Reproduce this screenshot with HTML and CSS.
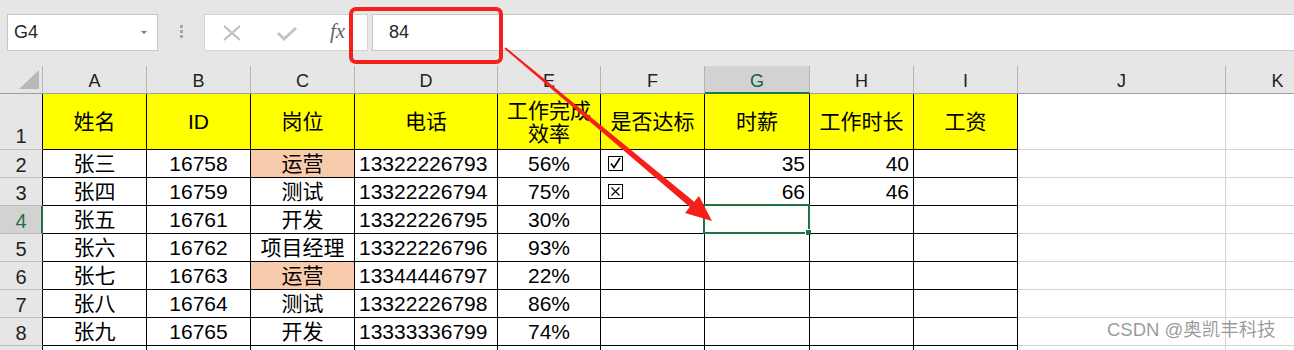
FILE: index.html
```html
<!DOCTYPE html>
<html lang="zh-CN">
<head>
    <meta charset="UTF-8">
    <title>工资表</title>
    <link rel="stylesheet" href="styles.css">
</head>
<body>
    <div class="app">
        <div class="toolbar">
            <div class="namebox"><span>G4</span><span class="caret"></span></div>
            <div class="grip"><i></i><i></i><i></i></div>
            <div class="fxbox">
                <svg class="ico-x" width="18" height="16" viewBox="0 0 18 16"><path d="M1 1 L17 15 M17 1 L1 15" stroke="#bdbdbd" stroke-width="2" fill="none"/></svg>
                <svg class="ico-ok" width="20" height="14" viewBox="0 0 20 14"><path d="M1 6 L7 12 L19 1" stroke="#c4c4c4" stroke-width="3" fill="none"/></svg>
                <span class="fx">fx</span>
            </div>
            <div class="formula">84</div>
        </div>

        <div class="sheet">
            <!-- column headers -->
            <div class="corner"><svg width="43" height="28"><polygon points="19,23 39,4 39,23" fill="#b8b8b8"/></svg></div>
            <div class="colhdr">A</div>
            <div class="colhdr">B</div>
            <div class="colhdr">C</div>
            <div class="colhdr">D</div>
            <div class="colhdr">E</div>
            <div class="colhdr">F</div>
            <div class="colhdr active">G</div>
            <div class="colhdr">H</div>
            <div class="colhdr">I</div>
            <div class="colhdr">J</div>
            <div class="colhdr">K</div>

            <!-- row 1 -->
            <div class="rowhdr first">1</div>
            <div class="cell b y c">姓名</div>
            <div class="cell b y c">ID</div>
            <div class="cell b y c">岗位</div>
            <div class="cell b y c">电话</div>
            <div class="cell b y c wrap">工作完成<br>效率</div>
            <div class="cell b y c">是否达标</div>
            <div class="cell b y c">时薪</div>
            <div class="cell b y c">工作时长</div>
            <div class="cell b y c">工资</div>
            <div class="cell"></div>
            <div class="cell"></div>

            <!-- row 2 -->
            <div class="rowhdr">2</div>
            <div class="cell b c">张三</div>
            <div class="cell b c">16758</div>
            <div class="cell b c pk">运营</div>
            <div class="cell b l">13322226793</div>
            <div class="cell b c">56%</div>
            <div class="cell b box"><svg width="15" height="15" viewBox="0 0 15 15"><rect x="0.5" y="0.5" width="14" height="14" fill="none" stroke="#000"/><path d="M3 7.5 L6 11.5 L12 2" stroke="#000" stroke-width="1.6" fill="none"/></svg></div>
            <div class="cell b r">35</div>
            <div class="cell b r">40</div>
            <div class="cell b"></div>
            <div class="cell"></div>
            <div class="cell"></div>

            <!-- row 3 -->
            <div class="rowhdr">3</div>
            <div class="cell b c">张四</div>
            <div class="cell b c">16759</div>
            <div class="cell b c">测试</div>
            <div class="cell b l">13322226794</div>
            <div class="cell b c">75%</div>
            <div class="cell b box"><svg width="15" height="15" viewBox="0 0 15 15"><rect x="0.5" y="0.5" width="14" height="14" fill="none" stroke="#000"/><path d="M3.5 3.5 L11.5 11.5 M11.5 3.5 L3.5 11.5" stroke="#000" stroke-width="1.1" fill="none"/></svg></div>
            <div class="cell b r">66</div>
            <div class="cell b r">46</div>
            <div class="cell b"></div>
            <div class="cell"></div>
            <div class="cell"></div>

            <!-- row 4 -->
            <div class="rowhdr active">4</div>
            <div class="cell b c">张五</div>
            <div class="cell b c">16761</div>
            <div class="cell b c">开发</div>
            <div class="cell b l">13322226795</div>
            <div class="cell b c">30%</div>
            <div class="cell b"></div>
            <div class="cell b selected"><span class="sel"><i class="handle"></i></span></div>
            <div class="cell b"></div>
            <div class="cell b"></div>
            <div class="cell"></div>
            <div class="cell"></div>

            <!-- row 5 -->
            <div class="rowhdr">5</div>
            <div class="cell b c">张六</div>
            <div class="cell b c">16762</div>
            <div class="cell b c">项目经理</div>
            <div class="cell b l">13322226796</div>
            <div class="cell b c">93%</div>
            <div class="cell b"></div>
            <div class="cell b"></div>
            <div class="cell b"></div>
            <div class="cell b"></div>
            <div class="cell"></div>
            <div class="cell"></div>

            <!-- row 6 -->
            <div class="rowhdr">6</div>
            <div class="cell b c">张七</div>
            <div class="cell b c">16763</div>
            <div class="cell b c pk">运营</div>
            <div class="cell b l">13344446797</div>
            <div class="cell b c">22%</div>
            <div class="cell b"></div>
            <div class="cell b"></div>
            <div class="cell b"></div>
            <div class="cell b"></div>
            <div class="cell"></div>
            <div class="cell"></div>

            <!-- row 7 -->
            <div class="rowhdr">7</div>
            <div class="cell b c">张八</div>
            <div class="cell b c">16764</div>
            <div class="cell b c">测试</div>
            <div class="cell b l">13322226798</div>
            <div class="cell b c">86%</div>
            <div class="cell b"></div>
            <div class="cell b"></div>
            <div class="cell b"></div>
            <div class="cell b"></div>
            <div class="cell"></div>
            <div class="cell"></div>

            <!-- row 8 -->
            <div class="rowhdr">8</div>
            <div class="cell b c">张九</div>
            <div class="cell b c">16765</div>
            <div class="cell b c">开发</div>
            <div class="cell b l">13333336799</div>
            <div class="cell b c">74%</div>
            <div class="cell b"></div>
            <div class="cell b"></div>
            <div class="cell b"></div>
            <div class="cell b"></div>
            <div class="cell"></div>
            <div class="cell"></div>

            <!-- row 9, only its top edge is in view -->
            <div class="rowhdr"></div>
            <div class="cell b"></div>
            <div class="cell b"></div>
            <div class="cell b"></div>
            <div class="cell b"></div>
            <div class="cell b"></div>
            <div class="cell b"></div>
            <div class="cell b"></div>
            <div class="cell b"></div>
            <div class="cell b"></div>
            <div class="cell"></div>
            <div class="cell"></div>
        </div>

        <!-- red annotation drawn over the sheet -->
        <svg class="annot" width="1294" height="350">
            <rect x="351" y="9" width="150" height="53" rx="5" fill="none" stroke="#f5201a" stroke-width="4"/>
            <polygon points="505.6,47.2 694.2,201.7 699.0,195.9 712,221 685.0,212.9 689.8,207.1 504.4,48.8" fill="#f5201a"/>
        </svg>

        <div class="watermark">CSDN @奥凯丰科技</div>
    </div>
</body>
</html>
```

FILE: styles.css
```css
body {
    margin: 0;
    font-family: "Liberation Sans", "Noto Sans CJK SC", sans-serif;
    background-color: #fff;
    overflow: hidden;
}

.app {
    position: relative;
    width: 1294px;
    height: 350px;
    overflow: hidden;
}


/* formula bar */

.toolbar {
    height: 66px;
    box-sizing: border-box;
    padding-top: 14px;
    background-color: #e6e6e6;
    display: flex;
    align-items: flex-start;
}

.namebox {
    margin-left: 7px;
    width: 151px;
    height: 37px;
    box-sizing: border-box;
    border: 1px solid #c6c6c6;
    background: #fff;
    display: flex;
    align-items: center;
    padding-left: 6px;
    font-size: 18px;
    color: #262626;
}

.caret {
    margin-left: auto;
    margin-right: 10px;
    border-left: 3px solid transparent;
    border-right: 3px solid transparent;
    border-top: 3px solid #777;
}

.grip {
    width: 46px;
    display: flex;
    flex-direction: column;
    align-items: center;
    gap: 2px;
    padding-top: 11px;
}

.grip i {
    display: block;
    width: 3px;
    height: 3px;
    background: #a6a6a6;
}

.fxbox {
    width: 164px;
    height: 37px;
    box-sizing: border-box;
    border: 1px solid #d4d4d4;
    background: #fff;
    display: flex;
    align-items: center;
}

.ico-x {
    margin-left: 18px;
}

.ico-ok {
    margin-left: 36px;
    margin-top: 3px;
}

.fx {
    margin-left: 33px;
    font-family: "Liberation Serif", serif;
    font-style: italic;
    font-size: 21px;
    color: #666;
    margin-top: -2px;
}

.formula {
    margin-left: 4px;
    flex: 1;
    height: 37px;
    box-sizing: border-box;
    border: 1px solid #c6c6c6;
    border-right: none;
    background: #fff;
    display: flex;
    align-items: center;
    padding-left: 16px;
    font-size: 18px;
    color: #262626;
}


/* sheet grid */

.sheet {
    display: grid;
    grid-template-columns: 43px 104px 104px 104px 143px 103px 104px 105px 104px 104px 208px 104px;
    grid-template-rows: 28px 56px repeat(8, 28px);
    width: 1330px;
}

.sheet > div {
    box-sizing: border-box;
    min-width: 0;
}

.corner {
    background: #e6e6e6;
    border-right: 1px solid #b4b4b4;
    border-bottom: 1px solid #9e9e9e;
}

.corner svg {
    display: block;
}

.colhdr {
    background: #e6e6e6;
    border-right: 1px solid #b4b4b4;
    border-bottom: 1px solid #9e9e9e;
    text-align: center;
    font-size: 18px;
    line-height: 24px;
    padding-top: 3px;
    color: #222;
}

.colhdr.active {
    background: #d2d2d2;
    border-bottom: 2px solid #217346;
    color: #1e5e3a;
}

.rowhdr {
    background: #e6e6e6;
    border-right: 1px solid #000;
    border-bottom: 1px solid #bdbdbd;
    display: flex;
    align-items: center;
    justify-content: center;
    font-size: 20px;
    line-height: 24px;
    padding-top: 2px;
    color: #222;
}

.rowhdr.first {
    align-items: flex-end;
    padding-bottom: 1px;
}

.rowhdr.active {
    background: #d2d2d2;
    border-right: 2px solid #217346;
    color: #217346;
    padding-left: 1px;
}

.cell {
    border-right: 1px solid #d4d4d4;
    border-bottom: 1px solid #d4d4d4;
    display: flex;
    align-items: center;
    font-size: 21px;
    line-height: 24px;
    padding-top: 1px;
    color: #000;
    white-space: nowrap;
}

.cell.b {
    border-right-color: #000;
    border-bottom-color: #000;
}

.cell.y {
    background: #ffff00;
}

.cell.pk {
    background: #f8cbad;
}

.c {
    justify-content: center;
    text-align: center;
}

.l {
    padding-left: 4px;
}

.r {
    justify-content: flex-end;
    padding-right: 4px;
}

.wrap {
    white-space: normal;
    line-height: 23px;
}

.box {
    padding-left: 7px;
}

.box svg {
    display: block;
    margin-top: -1px;
}

.selected {
    position: relative;
}

.sel {
    position: absolute;
    left: -2px;
    top: -2px;
    right: -1px;
    bottom: -1px;
    border: 2px solid #217346;
}

.handle {
    position: absolute;
    right: -3px;
    bottom: -3px;
    width: 6px;
    height: 6px;
    background: #217346;
    border-top: 1px solid #fff;
    border-left: 1px solid #fff;
    box-sizing: border-box;
}


/* overlays */

.annot {
    position: absolute;
    left: 0;
    top: 0;
    pointer-events: none;
}

.watermark {
    position: absolute;
    left: 1107px;
    top: 319px;
    font-size: 18.5px;
    line-height: 22px;
    color: rgba(110, 110, 110, 0.7);
}
```
